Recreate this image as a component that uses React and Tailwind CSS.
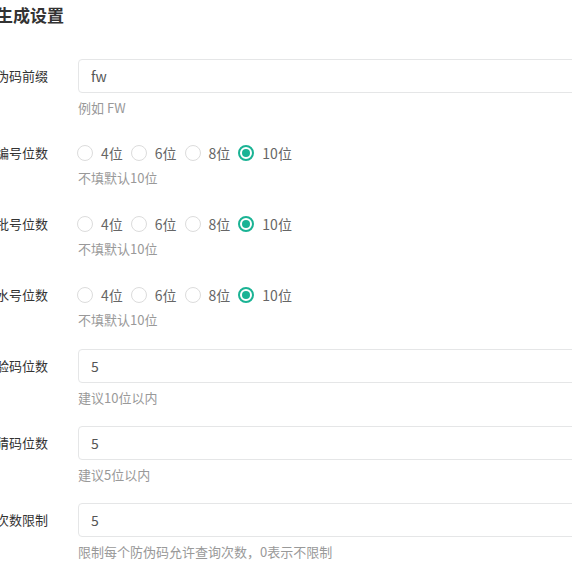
import React from "react";

const font = { fontFamily: '"Noto Sans CJK SC", "Noto Sans", sans-serif' };

function Label({ children }) {
  return (
    <div className="w-[120px] shrink-0 pt-[7px] pr-0 text-right text-[13px] leading-5 text-[#333] whitespace-nowrap">
      {children}
    </div>
  );
}

function Help({ children }) {
  return <div className="mt-[5px] h-5 text-[13px] leading-5 text-[#999] whitespace-nowrap">{children}</div>;
}

function InputRow({ label, value, help }) {
  return (
    <div className="flex gap-[30px] mb-[18px]">
      <Label>{label}</Label>
      <div className="flex-1">
        <div className="h-[34px] w-full rounded-[4px] border border-[#e5e6e7] bg-white px-3 flex items-center text-[14px] text-[#555]">
          {value}
        </div>
        <Help>{help}</Help>
      </div>
    </div>
  );
}

function Radio({ checked, text }) {
  return (
    <div className="flex items-center mr-2">
      {checked ? (
        <span className="w-4 h-4 rounded-full border-2 border-[#1ab394] flex items-center justify-center">
          <span className="w-[8px] h-[8px] rounded-full bg-[#1ab394]" />
        </span>
      ) : (
        <span className="w-4 h-4 rounded-full border border-[#dcdcdc] bg-white" />
      )}
      <span className="ml-2 text-[14px] leading-5 text-[#666]">{text}</span>
    </div>
  );
}

function RadioRow({ label }) {
  return (
    <div className="flex gap-[30px] mb-[18px]">
      <Label>{label}</Label>
      <div className="flex-1 pt-[7px] pb-px">
        <div className="h-5 flex items-center -ml-px">
          <Radio text="4位" />
          <Radio text="6位" />
          <Radio text="8位" />
          <Radio text="10位" checked />
        </div>
        <Help>不填默认10位</Help>
      </div>
    </div>
  );
}

export default function App() {
  return (
    <div className="w-[572px] h-[570px] overflow-hidden bg-white" style={font}>
      <div className="pt-[3px] ml-[-4px] h-[27px] text-[17px] leading-6 font-bold text-[#333] whitespace-nowrap">
        生成设置
      </div>
      <div className="mt-[32px] ml-[-72px] w-[720px]">
        <InputRow label="防伪码前缀" value="fw" help="例如 FW" />
        <RadioRow label="编号位数" />
        <RadioRow label="批号位数" />
        <RadioRow label="流水号位数" />
        <InputRow label="校验码位数" value="5" help="建议10位以内" />
        <InputRow label="防猜码位数" value="5" help="建议5位以内" />
        <InputRow label="查询次数限制" value="5" help="限制每个防伪码允许查询次数，0表示不限制" />
      </div>
    </div>
  );
}
